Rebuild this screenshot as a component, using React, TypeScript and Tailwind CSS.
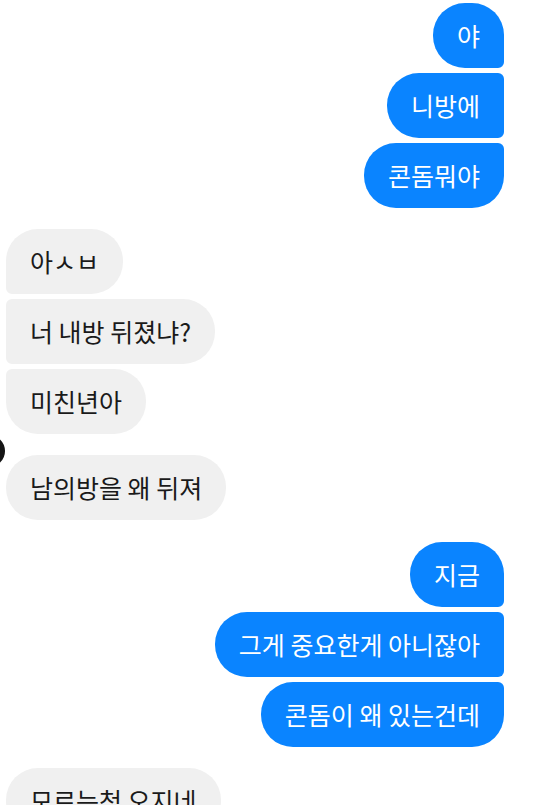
type Side = "me" | "them";
type Pos = "first" | "middle" | "last" | "single";

const font = { fontFamily: '"Noto Sans CJK KR", "Noto Sans", sans-serif' };

// corner shapes per side and position in a group
const corners: Record<Side, Record<Pos, string>> = {
  me: {
    first: "rounded-[32px] rounded-br-[6px]",
    middle: "rounded-[32px] rounded-tr-[6px] rounded-br-[6px]",
    last: "rounded-[32px] rounded-tr-[6px]",
    single: "rounded-[32px]",
  },
  them: {
    first: "rounded-[32px] rounded-bl-[6px]",
    middle: "rounded-[32px] rounded-tl-[6px] rounded-bl-[6px]",
    last: "rounded-[32px] rounded-tl-[6px]",
    single: "rounded-[32px]",
  },
};

const groups: { side: Side; gap: string; lines: string[]; avatar?: boolean }[] = [
  { side: "me", gap: "mt-[3px]", lines: ["야", "니방에", "콘돔뭐야"] },
  { side: "them", gap: "mt-[21px]", lines: ["아ㅅㅂ", "너 내방 뒤졌냐?", "미친년아"] },
  { side: "them", gap: "mt-[21px]", lines: ["남의방을 왜 뒤져"], avatar: true },
  { side: "me", gap: "mt-[22px]", lines: ["지금", "그게 중요한게 아니잖아", "콘돔이 왜 있는건데"] },
  { side: "them", gap: "mt-[21px]", lines: ["모르는척 오지네"] },
];

function posOf(i: number, n: number): Pos {
  if (n === 1) return "single";
  if (i === 0) return "first";
  if (i === n - 1) return "last";
  return "middle";
}

function Bubble({ text, side, pos }: { text: string; side: Side; pos: Pos }) {
  const color =
    side === "me" ? "bg-[#0a84ff] text-white" : "bg-[#f0f0f0] text-[#1a1a1a]";
  return (
    <div
      className={`h-[65px] px-[24px] flex items-center text-[25px] leading-none whitespace-nowrap ${color} ${corners[side][pos]}`}
      style={font}
    >
      {text}
    </div>
  );
}

export default function App() {
  return (
    <div className="w-[544px] h-[805px] overflow-hidden bg-white">
      {groups.map((g, gi) => (
        <div
          key={gi}
          className={`relative flex flex-col gap-[5px] ${g.gap} ${
            g.side === "me" ? "items-end pr-[40px]" : "items-start pl-[6px]"
          }`}
        >
          {/* cropped avatar peeking in at the left edge */}
          {g.avatar && (
            <div className="absolute left-[-30px] top-[-20px] w-[35px] h-[32px] rounded-full bg-[#141414]" />
          )}
          {g.lines.map((t, i) => (
            <Bubble key={i} text={t} side={g.side} pos={posOf(i, g.lines.length)} />
          ))}
        </div>
      ))}
    </div>
  );
}
